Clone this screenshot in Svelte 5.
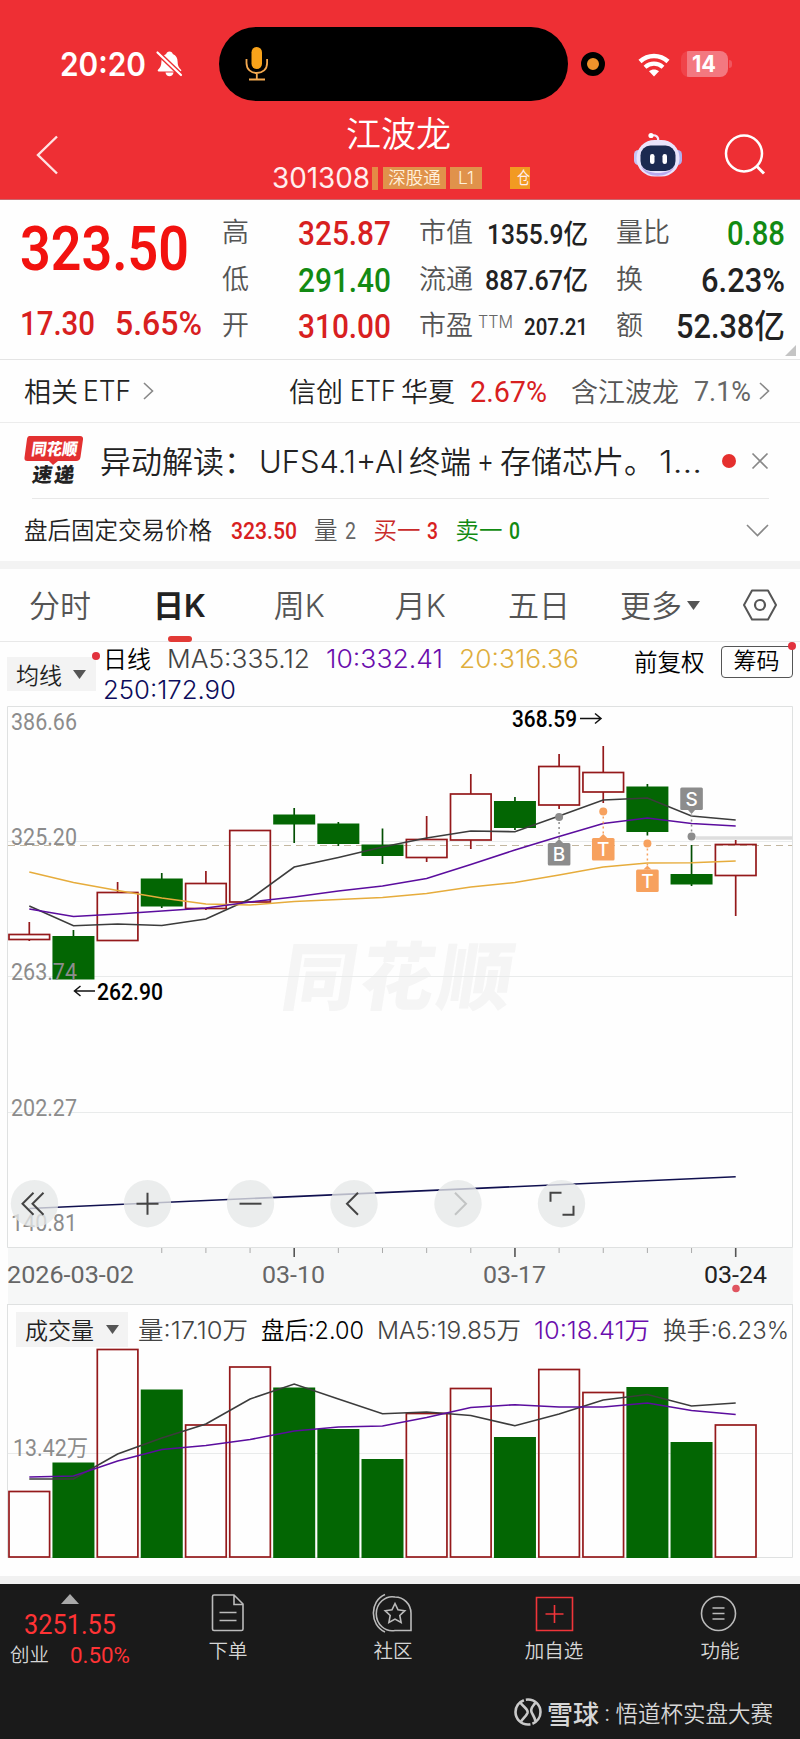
<script lang="ts">
  type Candle = {
    up: boolean;
    top: number;
    bottom: number;
    high: number;
    low: number;
    vol: number;
  };

  const STEP = 44.15;
  const FIRST = 29.3;
  const VOL_BASE = 1557.5;

  const cx = (i: number) => FIRST + i * STEP;

  const raw: [number, number, number, number, number, number][] = [
    [1, 934.5, 939.5, 922, 941, 1491],
    [0, 936, 979.5, 930, 979.5, 1462.5],
    [1, 892.5, 940.5, 882, 940.5, 1349],
    [0, 878.5, 906.5, 873, 908, 1389.5],
    [1, 883.5, 908.5, 871, 910, 1424.5],
    [1, 830.5, 902, 830.5, 902, 1366.5],
    [0, 814.5, 824.5, 808, 843, 1387.5],
    [0, 823.5, 844, 822, 846, 1429],
    [0, 844.5, 856, 828.5, 864, 1459],
    [1, 839.5, 857.5, 816, 862, 1413],
    [1, 794, 840, 774, 849, 1388],
    [0, 801, 828, 797, 830, 1437],
    [1, 766.5, 805, 754, 809, 1369],
    [1, 772.5, 792, 746, 803, 1392],
    [0, 786.5, 832, 784, 835.5, 1387],
    [0, 874, 884.5, 845, 886, 1442],
    [1, 844.5, 875.5, 840, 916, 1424.5],
  ];

  const candles: Candle[] = raw.map(([up, top, bottom, high, low, vol]) => ({
    up: up === 1,
    top,
    bottom,
    high,
    low,
    vol,
  }));

  const line = (ys: number[]) =>
    ys.map((y, i) => `${cx(i).toFixed(1)},${y}`).join(" ");

  const ma5 = line([906, 925.7, 924, 925.5, 919, 899, 867, 857.5, 847, 838, 831, 831.7, 816, 800, 798, 816, 820]);
  const ma10 = line([909, 916.5, 914, 911, 908, 902, 897, 891, 886, 878.5, 864.5, 850, 836.5, 823.5, 818, 823.5, 826]);
  const ma20 = line([872, 882.5, 890.5, 898, 904, 905, 901.5, 899.5, 897.5, 893.5, 887, 882.5, 875, 867, 863, 862.7, 861]);
  const vma5 = line([1479, 1479, 1454, 1438, 1424, 1399, 1384, 1399, 1413.7, 1412, 1415.5, 1425.7, 1414, 1400, 1394.5, 1406, 1403]);
  const vma10 = line([1477, 1476, 1461, 1449.5, 1445.5, 1439.5, 1431, 1427, 1426, 1417.5, 1407.5, 1404.7, 1407, 1407, 1403, 1410.5, 1414.5]);

  const priceLabels = [
    { text: "386.66", y: 729.5 },
    { text: "325.20", y: 844.5 },
    { text: "263.74", y: 980 },
    { text: "202.27", y: 1115.5 },
    { text: "140.81", y: 1231 },
  ];

  const marks = [
    { text: "B", i: 12, box: 843, dot: 817, color: "#8c8c8c" },
    { text: "T", i: 13, box: 838, dot: 811.5, color: "#f7a15e" },
    { text: "T", i: 14, box: 869.5, dot: 843.5, color: "#f7a15e" },
    { text: "S", i: 15, box: 787.5, dot: 836.5, color: "#8c8c8c" },
  ];

  const tools = [
    { x: 34.5, d: "M-1 -11 L-12 0 L-1 11 M9 -11 L-2 0 L9 11" },
    { x: 147.5, d: "M-11 0 H11 M0 -11 V11" },
    { x: 250.5, d: "M-11 0 H11" },
    { x: 354, d: "M4 -11 L-7 0 L4 11" },
    { x: 458, d: "M-3 -11 L8 0 L-3 11", off: true },
    { x: 561.5, d: "M-11 -2 V-11 H0 M12 2 V11 H1" },
  ];
</script>

<!-- a run of text squeezed to a given width; height is the cap height -->
{#snippet fit(text: string, w: number, cap: number, cls: string)}
  <svg class="fit {cls}" width={w} height={cap}>
    <text y={cap} font-size={cap / 0.716} textLength={w} lengthAdjust="spacingAndGlyphs">{text}</text>
  </svg>
{/snippet}

<div class="app">
  <header>
    <div class="status">
      <div class="time">{@render fit("20:20", 86, 23, "sf semi white")}</div>
      <svg class="bell" width="27" height="28" viewBox="0 0 27 28">
        <path d="M13.5 1.5c1.8 0 3 1 3.3 2.4 3.4 1.2 4.7 4 4.8 7.6.1 4 .9 6 3.4 8.2.6.6.3 1.8-.7 1.8H2.7c-1 0-1.3-1.2-.7-1.8 2.5-2.2 3.3-4.2 3.4-8.2.1-3.6 1.4-6.4 4.8-7.6.3-1.4 1.5-2.4 3.3-2.4zM9.5 22.5h8c-.3 2.3-1.9 3.7-4 3.7s-3.7-1.4-4-3.7z" fill="#fff" />
        <path d="M1 2 25.5 25.5" stroke="#ee2f34" stroke-width="5" />
        <path d="M1.5 2.5 25 25" stroke="#fff" stroke-width="2.2" stroke-linecap="round" />
      </svg>
      <div class="island">
        <svg width="24" height="34" viewBox="0 0 24 34">
          <rect x="6.5" y="0" width="10.5" height="22" rx="5.2" fill="#f9a31a" />
          <path d="M1.5 12v4c0 6.5 4.5 10 10.3 10s10.3-3.5 10.3-10v-4M11.8 26v6M4 32.5h16" fill="none" stroke="#f4a950" stroke-width="1.8" />
        </svg>
      </div>
      <div class="rec"></div>
      <svg class="wifi" width="32" height="25" viewBox="0 0 32 25">
        <path d="M2 9.5C10 2 22 2 30 9.5" fill="none" stroke="#fff" stroke-width="4.5" />
        <path d="M7 15.2c5.3-4.7 12.7-4.7 18 0" fill="none" stroke="#fff" stroke-width="4.2" />
        <path d="M11 19.2c3-2.4 7-2.4 10 0L16 24.5z" fill="#fff" />
      </svg>
      <div class="battery">{@render fit("14", 24, 16, "sf bold white")}</div>
      <div class="cap"></div>
    </div>

    <nav>
      <svg class="back" width="23" height="40" viewBox="0 0 23 40">
        <path d="M21 1.5 2 20 21 38.5" fill="none" stroke="#ffe3e3" stroke-width="2.4" />
      </svg>
      <div class="title">
        <h1>江波龙</h1>
        <div class="code">
          {@render fit("301308", 98, 20, "sf light-white")}
          <i class="sliver"></i>
          <span class="badge sz">深股通</span>
          <span class="badge l1">L1</span>
          <div class="badge hold">{@render fit("仓", 13, 12.5, "sf light-white")}</div>
        </div>
      </div>
      <svg class="robot" width="50" height="46" viewBox="0 0 50 46">
        <path d="M25 9c1-4-2-6.5-7-5.5" fill="none" stroke="#f4e8fb" stroke-width="2.2" />
        <circle cx="18" cy="3.5" r="2.6" fill="#fff" />
        <rect x="1" y="18" width="9" height="15" rx="4.5" fill="#c5c4f5" />
        <rect x="40" y="18" width="9" height="15" rx="4.5" fill="#aeb0ee" />
        <rect x="3.5" y="8" width="43" height="36.5" rx="18" fill="#e9e4fb" />
        <path d="M8 34c5 13 28 13 34 0-4 5-10 7-17 7S12 39 8 34z" fill="#b9a9ee" />
        <rect x="7.5" y="13.5" width="35" height="25.5" rx="10" fill="#1b2a50" />
        <rect x="17" y="22" width="4.5" height="10" rx="2.2" fill="#fff" />
        <rect x="29.5" y="22" width="4.5" height="10" rx="2.2" fill="#fff" />
      </svg>
      <svg class="search" width="42" height="42" viewBox="0 0 42 42">
        <circle cx="20" cy="19.5" r="18" fill="none" stroke="#fff" stroke-width="2.5" />
        <path d="m32.5 32 7.500 7.500" stroke="#fff" stroke-width="3" />
      </svg>
    </nav>
  </header>

  <section class="quote">
    <div class="last">
      {@render fit("323.50", 169, 43.5, "din semi hot")}
      <div class="change">
        {@render fit("17.30", 75, 24, "din strong red")}
        {@render fit("5.65%", 87, 24, "din strong red")}
      </div>
    </div>
    <dl>
      <div><dt>高</dt><dd>{@render fit("325.87", 93, 24, "din strong red")}</dd></div>
      <div><dt>低</dt><dd>{@render fit("291.40", 93, 24, "din strong green")}</dd></div>
      <div><dt>开</dt><dd>{@render fit("310.00", 93, 24, "din strong red")}</dd></div>
    </dl>
    <dl>
      <div><dt>市值</dt><dd>{@render fit("1355.9亿", 101, 19.5, "din strong dark")}</dd></div>
      <div><dt>流通</dt><dd>{@render fit("887.67亿", 103, 19.5, "din strong dark")}</dd></div>
      <div>
        <dt>市盈</dt>
        <span class="ttm">{@render fit("TTM", 35, 12, "sf thin grey")}</span>
        <dd>{@render fit("207.21", 64, 16.5, "din strong dark")}</dd>
      </div>
    </dl>
    <dl>
      <div><dt>量比</dt><dd>{@render fit("0.88", 58, 24, "din strong green")}</dd></div>
      <div><dt>换</dt><dd>{@render fit("6.23%", 84, 24, "din strong dark")}</dd></div>
      <div><dt>额</dt><dd>{@render fit("52.38亿", 109, 24, "din strong dark")}</dd></div>
    </dl>
    <i class="corner"></i>
  </section>

  <section class="etf">
    <span>相关</span>
    <div class="e1">{@render fit("ETF", 48, 20, "sf dark thin")}</div>
    <svg class="chev" width="11" height="18"><path d="m1 1 8.500 8L1 17" /></svg>
    <span class="name">信创</span>
    <div class="e2">{@render fit("ETF", 46, 20, "sf dark thin")}</div>
    <span class="hx">华夏</span>
    <div class="pct">{@render fit("2.67%", 77, 21, "din red")}</div>
    <span class="inc">含江波龙</span>
    <div class="w">{@render fit("7.1%", 57, 20, "din grey")}</div>
    <svg class="chev end" width="11" height="18"><path d="m1 1 8.500 8L1 17" /></svg>
  </section>

  <section class="news">
    <svg class="logo" width="60" height="50" viewBox="0 0 60 50">
      <path d="M5.500 0H56q3.500 0 3 3.500L56.500 21q-.5 4-4.500 4H34l-5 4-4-4H3.500Q0 25 .5 21.500L3 3Q3.500 0 5.500 0z" fill="#e33131" />
      <g transform="skewX(-8)">
        <text class="lg" x="9.500" y="19.500" fill="#fff" font-size="16.500" textLength="46" lengthAdjust="spacingAndGlyphs">同花顺</text>
        <text class="lg" x="14" y="46" fill="#222" font-size="20" textLength="42">速递</text>
      </g>
    </svg>
    <span class="head">异动解读：</span>
    <div class="n1">{@render fit("UFS4.1+AI", 145, 22.5, "sf dark thin")}</div>
    <span class="n2">终端</span>
    <div class="n3">{@render fit("+", 17, 24, "sf dark thin")}</div>
    <span class="n4">存储芯片。</span>
    <div class="n5">{@render fit("1...", 43, 22.5, "sf dark thin")}</div>
    <i class="dot"></i>
    <svg class="close" width="18" height="18"><path d="M1.500 1.500l15 15M16.500 1.500l-15 15" stroke="#888" stroke-width="1.700" /></svg>
  </section>

  <section class="after">
    <span class="lead">盘后固定交易价格</span>
    <div class="a1">{@render fit("323.50", 66, 17, "din strong red")}</div>
    <span class="a2">量</span>
    <div class="a3">{@render fit("2", 11, 16.5, "din grey")}</div>
    <span class="a4">买一</span>
    <div class="a5">{@render fit("3", 11, 16.5, "din strong red")}</div>
    <span class="a6">卖一</span>
    <div class="a7">{@render fit("0", 11, 16.5, "din strong green")}</div>
    <svg class="down" width="23" height="13"><path d="M1 1l10.500 10.500L22 1" /></svg>
  </section>

  <div class="tabs">
    <span class="t1">分时</span>
    <span class="t2 on">日<b>K</b></span>
    <span class="t3">周<b>K</b></span>
    <span class="t4">月<b>K</b></span>
    <span class="t5">五日</span>
    <span class="t6">更多</span>
    <svg class="tri" width="13" height="9"><path d="M0 0h13L6.500 9z" fill="#555" /></svg>
    <svg class="hex" width="36" height="32" viewBox="0 0 36 32">
      <path d="M10 1.500h16L34 16l-8 14.500H10L2 16z" fill="none" stroke="#555" stroke-width="2" stroke-linejoin="round" />
      <circle cx="18" cy="16" r="5" fill="none" stroke="#555" stroke-width="2.200" />
    </svg>
  </div>

  <div class="legend">
    <div class="select">
      均线
      <svg width="13" height="9"><path d="M0 0h13L6.500 9z" fill="#555" /></svg>
      <i class="new"></i>
    </div>
    <div class="avg">
      <div class="row">
        <span class="day">日线</span>
        {@render fit("MA5:335.12", 143, 18, "sf soft")}
        {@render fit("10:332.41", 117, 18, "sf purple")}
        {@render fit("20:316.36", 120, 18, "sf gold")}
      </div>
      <div class="row">{@render fit("250:172.90", 133, 18, "sf navy")}</div>
    </div>
    <span class="adj">前复权</span>
    <span class="chips">筹码<i class="new"></i></span>
  </div>

  <div class="chart">
    <svg width="800" height="598" viewBox="0 706 800 598">
      <rect x="8" y="1248" width="785" height="56" fill="#f6f7f7" />
      <text class="mark" x="0" y="0" transform="translate(279 1004) skewX(-9)" textLength="230">同花顺</text>
      <path class="frame" d="M7.500 1247.500V706.500H792.500V1247.500z" />
      <path class="grid" d="M8 841.500H792M8 976.500H792M8 1112.500H792" />
      <path d="M696 838H792" stroke="#dedede" stroke-width="3.500" />
      <path d="M8 845.500H792" stroke="#c3b7a0" stroke-width="1" stroke-dasharray="7 5" />

      {#each candles as c, i}
        {#if c.up}
          <path class="rise" d="M{cx(i)} {c.high}V{c.top}M{cx(i)} {c.bottom}V{c.low}" />
          <rect class="rise" x={cx(i) - 20.3} y={c.top} width="40.600" height={c.bottom - c.top} />
        {:else}
          <path class="wick" d="M{cx(i)} {c.high}V{c.low}" />
          <rect class="fall" x={cx(i) - 21} y={c.top} width="42" height={c.bottom - c.top} />
        {/if}
      {/each}

      <polyline class="ma soft-l" points={ma5} />
      <polyline class="ma gold-l" points={ma20} />
      <polyline class="ma purple-l" points={ma10} />
      <path class="ma navy-l" d="M{cx(0)} 1208.500L{cx(16)} 1176.700" />

      {#each priceLabels as p}
        <text class="label" x="11" y={p.y} textLength="66" lengthAdjust="spacingAndGlyphs">{p.text}</text>
      {/each}

      <text class="peak" x="97" y="999.500" textLength="66" lengthAdjust="spacingAndGlyphs">262.90</text>
      <path class="arrow" d="M95 991H75M80.500 986l-6 5 6 5" />
      <text class="peak" x="512" y="727" textLength="65" lengthAdjust="spacingAndGlyphs">368.59</text>
      <path class="arrow" d="M580 718.500H600M595 713.500l6 5-6 5" />

      {#each marks as m}
        {@const x = cx(m.i)}
        {@const below = m.box > m.dot}
        <path d="M{x} {m.dot}V{below ? m.box : m.box + 23}" stroke={m.color} stroke-width="1.500" stroke-dasharray="2 3" />
        <circle cx={x} cy={m.dot} r="4" fill={m.color} />
        <rect x={x - 11.3} y={m.box} width="22.600" height="22.600" rx="1.500" fill={m.color} />
        <path d={below ? `M${x - 4} ${m.box}l4 -4 4 4z` : `M${x - 4} ${m.box + 22}l4 4.500 4 -4.500z`} fill={m.color} />
        <text class="bs" {x} y={m.box + 18}>{m.text}</text>
      {/each}

      {#each candles as _, i}
        {#if i > 2}
          <path d="M{cx(i)} 1248v{i % 5 === 1 ? 9 : 5}" stroke={i % 5 === 1 ? "#555" : "#aaa"} stroke-width={i % 5 === 1 ? 1.6 : 1} />
        {/if}
      {/each}
      <text class="date" x="7" y="1282.500" textLength="127" lengthAdjust="spacingAndGlyphs">2026-03-02</text>
      <text class="date" x="262" y="1282.500" textLength="63" lengthAdjust="spacingAndGlyphs">03-10</text>
      <text class="date" x="483" y="1282.500" textLength="63" lengthAdjust="spacingAndGlyphs">03-17</text>
      <text class="date today" x="704" y="1282.500" textLength="63" lengthAdjust="spacingAndGlyphs">03-24</text>
      <circle cx="736" cy="1288.500" r="3.800" fill="#e05560" />

      {#each tools as t}
        <g transform="translate({t.x} 1203.700)">
          <circle r="23.700" fill="#e6e8e8" fill-opacity="0.780" />
          <path class="tool" class:off={t.off} d={t.d} />
        </g>
      {/each}
    </svg>
  </div>

  <div class="volume">
    <div class="vhead">
      <div class="select">
        成交量
        <svg width="13" height="9"><path d="M0 0h13L6.500 9z" fill="#555" /></svg>
      </div>
      {@render fit("量:17.10万", 110, 17, "sf soft")}
      {@render fit("盘后:2.00", 103, 17, "sf black")}
      {@render fit("MA5:19.85万", 144, 17, "sf soft")}
      {@render fit("10:18.41万", 116, 17, "sf purple")}
      {@render fit("换手:6.23%", 126, 17, "sf soft")}
    </div>
    <svg width="800" height="228" viewBox="0 1348 800 228">
      <path class="frame" d="M7.500 1348V1557.500H792.500V1348" />
      <path class="grid" d="M8 1453.500H792" />
      {#each candles as c, i}
        {#if c.up}
          <rect class="rise" x={cx(i) - 20.3} y={c.vol + 0.5} width="40.600" height={VOL_BASE - c.vol - 1} />
        {:else}
          <rect class="fall" x={cx(i) - 21} y={c.vol} width="42" height={VOL_BASE - c.vol + 0.5} />
        {/if}
      {/each}
      <polyline class="ma soft-l" points={vma5} />
      <polyline class="ma purple-l" points={vma10} />
      <text class="label" x="13" y="1456" textLength="75" lengthAdjust="spacingAndGlyphs">13.42万</text>
    </svg>
  </div>

  <footer>
    <div class="bar">
      <div class="index">
        <svg width="18" height="10"><path d="M9 0l9 10H0z" fill="#aaa" /></svg>
        {@render fit("3251.55", 92, 20, "din bright")}
        <div class="idx">
          <span>创业</span>
          {@render fit("0.50%", 60, 16, "din bright")}
        </div>
      </div>
      <div class="item i1">
        <svg width="40" height="40" viewBox="0 0 40 40">
          <path d="M4.500 3.500q0-1.500 1.500-1.500H26l9 9v25q0 1.500-1.500 1.500H6q-1.500 0-1.500-1.500zM26 2v9.500h9M11.500 19.500h17M11.500 27.500h17" />
        </svg>
        <span>下单</span>
      </div>
      <div class="item i2">
        <svg width="42" height="40" viewBox="0 0 42 40">
          <path d="M23 4a16 17 0 1 0 0 33.500H39V20A16 16.500 0 0 0 23 4z" />
          <path d="M13 1.500C-2.500 8-2.500 32 13 39" />
          <path d="m23 10.500 3 6.300 6.800.9-5 4.800 1.300 6.900-6.100-3.300-6.100 3.300 1.300-6.900-5-4.800 6.800-.9z" />
        </svg>
        <span>社区</span>
      </div>
      <div class="item i3 add">
        <svg width="40" height="40" viewBox="0 0 40 40">
          <path d="M2.500 4.500H38.500V37.500H2.500zM20.500 12v18M11.500 21h18" />
        </svg>
        <span>加自选</span>
      </div>
      <div class="item i4">
        <svg width="40" height="40" viewBox="0 0 40 40">
          <circle cx="18.500" cy="20.500" r="17" />
          <path d="M12.500 15h12M12.500 20.500h12M12.500 26h12" />
        </svg>
        <span>功能</span>
      </div>
    </div>
    <div class="credit">
      <svg width="30" height="30" viewBox="0 0 30 30">
        <circle cx="15" cy="15" r="12.500" stroke-dasharray="15 2 37.300 2 22.300" />
        <path d="M7.500 5.500C9 9 16 12 14.500 16 13 19.500 10 21.500 8 24.500" />
        <path d="M22.500 5.500C20.500 9 17 11 18.500 15c1.200 3 3.500 5.500 4 9.500" />
      </svg>
      <b>雪球</b>
      <span class="colon">:</span>
      <span class="who">悟道杯实盘大赛</span>
    </div>
  </footer>
</div>

<style>
  :global(body) {
    background: #fff;
  }

  .app {
    width: 800px;
    height: 1739px;
    overflow: hidden;
    background: #fefefe;
    font-family: Inter, "Noto Sans CJK SC", sans-serif;
    font-weight: 350;
    color: #222;
    white-space: nowrap;
  }

  .app * {
    box-sizing: border-box;
  }

  svg {
    display: block;
    flex: none;
    overflow: visible;
  }

  i {
    display: block;
  }

  .sf { font-family: Inter, "Noto Sans CJK SC", sans-serif; font-weight: 400; }
  .din { font-family: Roboto, "Noto Sans CJK SC", sans-serif; font-weight: 400; }
  .strong { font-weight: 500; }
  .semi { font-weight: 600; }
  .bold { font-weight: 700; }
  .thin { font-weight: 350; }
  .white { fill: #fff; }
  .light-white { fill: #ffeeee; }
  .hot { fill: #f2120f; }
  .red { fill: #d8201f; }
  .green { fill: #128a12; }
  .dark { fill: #222; }
  .black { fill: #000; font-weight: 350; }
  .soft { fill: #444; font-weight: 350; }
  .grey { fill: #666; }
  .purple { fill: #6a0dad; font-weight: 350; }
  .gold { fill: #dfae3c; font-weight: 350; }
  .navy { fill: #0c0c5c; font-weight: 350; }
  .bright { fill: #ff3335; }

  /* header */
  header {
    height: 200px;
    background: #ee2f34;
    border-bottom: 1px solid #c9686e;
  }

  .status {
    display: flex;
    align-items: center;
    height: 114px;
    padding: 14px 0 0 60px;
  }

  .bell { margin-left: 10px; }

  .island {
    width: 349px;
    height: 74px;
    margin-left: 36px;
    padding: 20px 0 0 26px;
    border-radius: 37px;
    background: #000;
  }

  .rec {
    width: 24px;
    height: 24px;
    margin-left: 13px;
    border-radius: 50%;
    border: 6.500px solid #000;
    background: #f0922b;
  }

  .wifi { margin-left: 33px; }

  .battery {
    width: 47px;
    height: 26px;
    margin-left: 11px;
    padding: 5px 0 0 11px;
    border-radius: 8px;
    background: linear-gradient(90deg, #f0434a 6px, #f37880 6px);
  }

  .cap {
    width: 3px;
    height: 8px;
    margin-left: 1px;
    border-radius: 0 3px 3px 0;
    background: #f0565e;
  }

  nav {
    display: flex;
    align-items: center;
    height: 82px;
    padding-left: 36px;
  }

  .title {
    width: 276px;
    height: 80px;
    margin-left: 213px;
  }

  h1 {
    margin: 0 0 0 74px;
    font-size: 35px;
    line-height: 39px;
    font-weight: 350;
    color: #fff;
  }

  .code {
    display: flex;
    align-items: center;
    height: 24px;
    margin-top: 12px;
  }

  .sliver {
    width: 6px;
    height: 23px;
    margin-left: 2px;
    background: #e58a45;
  }

  .badge {
    height: 22.500px;
    font-size: 17.500px;
    line-height: 21px;
    text-align: center;
    color: #fff1dc;
    background: #e0924b;
  }

  .sz { width: 63px; margin-left: 5px; }
  .l1 { width: 32px; margin-left: 4px; }
  .hold { width: 20px; margin-left: 28px; padding: 4px 0 0 7px; background: #f29a22; }

  .robot { margin-left: 85px; }
  .search { margin-left: 41px; }

  /* quote */
  .quote {
    position: relative;
    display: grid;
    grid-template-columns: 202px 169px 169px 169px;
    height: 160px;
    padding-left: 20px;
    border-bottom: 1px solid #e4e4e4;
  }

  .last { padding-top: 26px; }
  .change { display: flex; gap: 20px; margin-top: 41px; }

  dl { margin: 0; padding-top: 10px; }
  dl:nth-of-type(2) { margin: 0 -28px 0 28px; }
  dl:nth-of-type(3) { margin: 0 -56px 0 56px; }

  dl div {
    display: flex;
    align-items: center;
    justify-content: space-between;
    height: 46.500px;
  }

  dt {
    font-size: 27px;
    line-height: 40px;
    color: #555;
  }

  dd { margin: 0; }
  .ttm { align-self: flex-start; margin: 13px 6px 0 0; }

  .corner {
    position: absolute;
    right: 4px;
    bottom: 3px;
    border-left: 11px solid transparent;
    border-bottom: 11px solid #c4c4c4;
  }

  /* ETF */
  .etf {
    display: flex;
    align-items: center;
    height: 63px;
    padding-left: 24px;
    border-bottom: 1px solid #ececec;
    font-size: 27px;
  }

  .etf > span { margin-top: -2px; }
  .chev path, .down path { fill: none; stroke: #888; stroke-width: 1.600; }
  .e1 { margin-left: 5px; }
  .chev { margin-left: 12px; }
  .name { margin-left: 135px; }
  .e2 { margin-left: 7px; }
  .hx { margin-left: 5px; }
  .pct { margin-left: 15px; }
  .inc { margin-left: 24px; color: #555; }
  .w { margin-left: 15px; }
  .end { margin-left: 8px; }

  /* news */
  .news {
    display: flex;
    align-items: center;
    height: 76px;
    margin-right: 31px;
    padding-left: 24px;
    font-size: 31px;
    background: linear-gradient(#e8e8e8, #e8e8e8) 32px 100% / 100% 1px no-repeat;
  }

  .news > span { margin-top: -4px; }
  .lg { font-weight: 900; font-family: "Noto Sans CJK SC", sans-serif; }
  .head { width: 158px; margin-left: 16px; }
  .n1 { margin-left: 1px; }
  .n2 { margin-left: 5px; }
  .n3 { margin-left: 6px; }
  .n4 { width: 159px; margin-left: 6px; }
  .n5 { margin-left: 0; }
  .dot { width: 14px; height: 14px; margin-left: 20px; border-radius: 50%; background: #e5302e; }
  .close { margin-left: 15px; }

  /* after hours */
  .after {
    display: flex;
    align-items: center;
    height: 62px;
    padding-left: 24px;
    font-size: 23.500px;
  }

  .after > span { margin-top: -2px; }
  .a1 { margin-left: 19px; }
  .a2 { margin-left: 17px; color: #555; }
  .a3 { margin-left: 7px; }
  .a4 { margin-left: 18px; color: #c92a2a; }
  .a5 { margin-left: 6px; }
  .a6 { margin-left: 18px; color: #128a12; }
  .a7 { margin-left: 6px; }
  .down { margin-left: 226px; }

  /* tabs */
  .tabs {
    display: flex;
    align-items: center;
    height: 81px;
    padding-left: 29px;
    border-top: 8px solid #f3f3f3;
    border-bottom: 1px solid #e8e8e8;
    font-size: 31px;
    color: #555;
  }

  .tabs > span { margin-top: -3px; }
  .tabs b { font-weight: inherit; }
  .t2 { position: relative; margin-left: 62px; }
  .t3 { margin-left: 68px; }
  .t4 { margin-left: 70px; }
  .t5 { margin-left: 62px; }
  .t6 { margin-left: 50px; }
  .tri { margin-left: 5px; }
  .hex { margin-left: 42px; }

  .on {
    font-weight: 600;
    color: #222;
  }

  .on::after {
    content: "";
    position: absolute;
    left: 15px;
    bottom: -16px;
    width: 24px;
    height: 6px;
    border-radius: 3px;
    background: #e23a36;
  }

  /* legends */
  .legend {
    display: flex;
    align-items: flex-start;
    height: 64px;
    padding: 1px 0 0 7px;
  }

  .select {
    position: relative;
    display: flex;
    flex: none;
    align-items: center;
    justify-content: space-between;
    width: 89px;
    height: 34px;
    margin-top: 14px;
    padding: 0 10px 0 9px;
    font-size: 23px;
    background: #f3f3f3;
  }

  .new {
    position: absolute;
    width: 8px;
    height: 8px;
    right: -4px;
    top: -5px;
    border-radius: 50%;
    background: #e2323e;
  }

  .avg { margin-left: 7px; }
  .row { display: flex; align-items: center; gap: 16px; height: 31px; }
  .day { margin-top: -2px; font-size: 24px; color: #000; }

  .adj {
    margin: 6px 0 0 55px;
    font-size: 23.500px;
    line-height: 27px;
    color: #000;
  }

  .chips {
    position: relative;
    width: 72px;
    height: 32px;
    margin: 3px 0 0 16px;
    border: 1.500px solid #555;
    border-radius: 4px;
    font-size: 23px;
    line-height: 29px;
    text-align: center;
    color: #000;
  }

  /* charts */
  .frame { fill: none; stroke: #dfe1e1; }
  .grid { stroke: #e9ebeb; }
  .rise { fill: none; stroke: #94191b; stroke-width: 1.700; }
  .fall { fill: #036603; }
  .wick { stroke: #034f03; stroke-width: 1.700; }
  .ma { fill: none; stroke-width: 1.600; }
  .soft-l { stroke: #3c3c3c; }
  .purple-l { stroke: #5b0d9e; }
  .gold-l { stroke: #e6ac3c; }
  .navy-l { stroke: #10104f; }

  .label {
    font: 400 23px Roboto, "Noto Sans CJK SC", sans-serif;
    fill: #8c8c8c;
  }

  .peak { font: 500 23px Roboto, sans-serif; fill: #000; }
  .date { font: 400 23.500px Roboto, sans-serif; fill: #666; }
  .today { fill: #222; }
  .arrow { fill: none; stroke: #111; stroke-width: 1.500; }
  .mark { font: 900 74px "Noto Sans CJK SC", sans-serif; fill: #f5f5f5; }
  .bs { font: 500 19px Inter, sans-serif; fill: #fff; text-anchor: middle; }
  .tool { fill: none; stroke: #444; stroke-width: 2; }
  .off { stroke: #c2c4c4; }

  .volume { height: 272px; }

  .vhead {
    display: flex;
    align-items: center;
    height: 44px;
    margin: 0 7px;
    padding-left: 8px;
    border: 1px solid #dfe1e1;
    border-bottom: 0;
  }

  .vhead .select { width: 112px; height: 35px; margin: 5px 10px 0 0; padding: 0 9px 0 9px; }
  .vhead .fit { margin: 8px 13px 0 0; }

  /* footer */
  footer {
    height: 163px;
    border-top: 8px solid #f1f1f1;
    background: #1a1a1a;
    color: #d6d6d6;
  }

  .bar { display: flex; height: 100px; }

  .index {
    display: flex;
    flex-direction: column;
    align-items: center;
    width: 140px;
    padding-top: 10px;
  }

  .index .bright { margin-top: 10px; }
  .idx { display: flex; align-items: center; gap: 21px; margin-top: 6px; font-size: 19.500px; line-height: 30px; }
  .idx .bright { margin-top: 0; }

  .item {
    display: flex;
    flex-direction: column;
    align-items: center;
    width: 60px;
    padding-top: 9px;
    font-size: 19.500px;
    line-height: 28px;
  }

  .item svg { margin-bottom: 4px; fill: none; stroke: #bbb; stroke-width: 1.600; }
  .add svg { stroke: #f0353a; }
  .i1 { margin-left: 58px; }
  .i2 { margin-left: 105px; }
  .i3 { margin-left: 101px; }
  .i4 { margin-left: 106px; }

  .credit {
    display: flex;
    align-items: center;
    height: 56px;
    padding-left: 513px;
    font-size: 22.500px;
  }

  .credit svg { fill: none; stroke: #c9c9c9; stroke-width: 2.600; }
  .credit b { margin-left: 4px; font-size: 26px; font-weight: 500; }
  .colon { margin: 0 5px; }
</style>
